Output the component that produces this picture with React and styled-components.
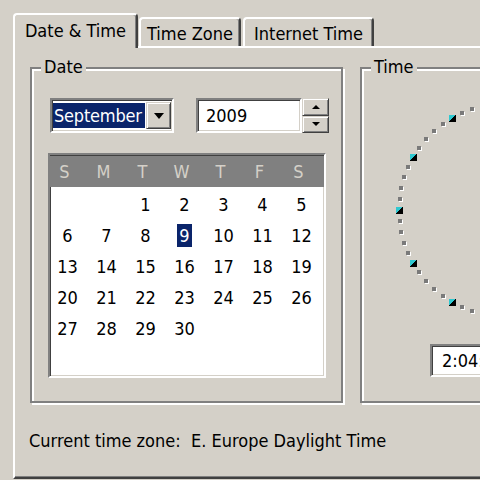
import React from 'react';
import styled, { createGlobalStyle } from 'styled-components';

const GlobalStyle = createGlobalStyle`
  html, body {
    margin: 0;
    padding: 0;
    background: #d4d0c8;
  }
  body {
    font-family: 'DejaVu Sans Condensed', 'DejaVu Sans', Tahoma, sans-serif;
    font-size: 18px;
    color: #000;
  }
`;

const MONTH_DAYS = [
  [null, null, 1, 2, 3, 4, 5],
  [6, 7, 8, 9, 10, 11, 12],
  [13, 14, 15, 16, 17, 18, 19],
  [20, 21, 22, 23, 24, 25, 26],
  [27, 28, 29, 30, null, null, null],
];

const WEEK = ['S', 'M', 'T', 'W', 'T', 'F', 'S'];

const ClockFace = () => {
  const cx = 113;
  const cy = 112;
  const r = 106;
  const dots = [];
  for (let i = 0; i < 60; i++) {
    const a = (i * 6 * Math.PI) / 180;
    const x = Math.round(cx + r * Math.sin(a));
    const y = Math.round(cy - r * Math.cos(a));
    if (i % 5 === 0) {
      dots.push(
        <g key={i}>
          <rect x={x - 3} y={y - 3} width="7" height="7" fill="#000" />
          <polygon points={`${x - 3},${y - 3} ${x + 3},${y - 3} ${x - 3},${y + 3}`} fill="#2fc8d0" />
        </g>
      );
    } else {
      dots.push(
        <g key={i}>
          <rect x={x - 1} y={y - 1} width="4" height="4" fill="#ffffff" />
          <rect x={x - 2} y={y - 2} width="4" height="4" fill="#7a7a7a" />
        </g>
      );
    }
  }
  return (
    <ClockSvg width="226" height="226" viewBox="0 0 226 226" shapeRendering="crispEdges">
      {dots}
    </ClockSvg>
  );
};

const App = () => {
  return (
    <>
      <GlobalStyle />
      <Screen>
        <TabStrip>
          <Tab $active $width={125}>Date &amp; Time</Tab>
          <Tab $width={102}>Time Zone</Tab>
          <Tab $width={131}>Internet Time</Tab>
        </TabStrip>
        <Panel>
          <GroupRow>
            <GroupBox $width={313}>
              <Legend>Date</Legend>
              <DateBody>
                <ControlRow>
                  <Combo>
                    <ComboText>September</ComboText>
                    <DropButton>
                      <svg width="10" height="6" viewBox="0 0 10 6">
                        <polygon points="0,0 10,0 5,6" fill="#000" />
                      </svg>
                    </DropButton>
                  </Combo>
                  <YearField>2009</YearField>
                  <Spinner>
                    <SpinButton>
                      <svg width="8" height="4" viewBox="0 0 8 4">
                        <polygon points="4,0 8,4 0,4" fill="#000" />
                      </svg>
                    </SpinButton>
                    <SpinButton>
                      <svg width="8" height="4" viewBox="0 0 8 4">
                        <polygon points="0,0 8,0 4,4" fill="#000" />
                      </svg>
                    </SpinButton>
                  </Spinner>
                </ControlRow>
                <Calendar>
                  <WeekHeader>
                    {WEEK.map((d, i) => (
                      <WeekDay key={i}>{d}</WeekDay>
                    ))}
                  </WeekHeader>
                  <DaysGrid>
                    {MONTH_DAYS.flat().map((d, i) => (
                      <DayCell key={i}>
                        {d && <DayNum $selected={d === 9}>{d}</DayNum>}
                      </DayCell>
                    ))}
                  </DaysGrid>
                </Calendar>
              </DateBody>
            </GroupBox>
            <GroupBox $width={260}>
              <Legend>Time</Legend>
              <TimeBody>
                <ClockFace />
                <TimeField>2:04:37 PM</TimeField>
              </TimeBody>
            </GroupBox>
          </GroupRow>
          <ZoneLine>Current time zone:&nbsp;&nbsp;E. Europe Daylight Time</ZoneLine>
        </Panel>
      </Screen>
    </>
  );
};

const Screen = styled.div`
  width: 480px;
  height: 480px;
  overflow: hidden;
  background: #d4d0c8;
  padding: 13px 0 0 13px;
  box-sizing: border-box;
`;

const TabStrip = styled.div`
  display: flex;
  align-items: flex-end;
  height: 33px;
  position: relative;
  z-index: 1;
`;

const Tab = styled.div`
  box-sizing: border-box;
  width: ${(p) => p.$width}px;
  height: ${(p) => (p.$active ? 35 : 29)}px;
  margin-bottom: ${(p) => (p.$active ? -2 : 0)}px;
  margin-right: ${(p) => (p.$active ? 1 : 2)}px;
  background: #d4d0c8;
  border-top: 2px solid #ffffff;
  border-left: 2px solid #ffffff;
  border-right: 2px solid #404040;
  box-shadow: inset -1px 0 0 #808080;
  border-radius: 4px 4px 0 0;
  display: flex;
  align-items: flex-start;
  justify-content: center;
  padding-top: ${(p) => (p.$active ? 6 : 5)}px;
  line-height: 20px;
  white-space: nowrap;
`;

const Panel = styled.div`
  box-sizing: border-box;
  width: 640px;
  height: 433px;
  background: #d4d0c8;
  border-top: 2px solid #ffffff;
  border-left: 2px solid #ffffff;
  border-bottom: 2px solid #404040;
  box-shadow: inset 0 -1px 0 #808080;
  padding: 0 0 0 15px;
  display: flex;
  flex-direction: column;
`;

const GroupRow = styled.div`
  display: flex;
  gap: 17px;
  margin-top: 19px;
`;

const GroupBox = styled.div`
  position: relative;
  box-sizing: border-box;
  width: ${(p) => p.$width}px;
  height: 336px;
  flex-shrink: 0;
  border: 2px solid #808080;
  box-shadow: inset 2px 2px 0 #ffffff, 2px 2px 0 #ffffff;
`;

const Legend = styled.div`
  position: absolute;
  top: -12px;
  left: 9px;
  padding: 0 3px;
  background: #d4d0c8;
  line-height: 20px;
`;

const DateBody = styled.div`
  display: flex;
  flex-direction: column;
  padding: 29px 0 0 18px;
`;

const ControlRow = styled.div`
  display: flex;
  align-items: flex-start;
`;

const Sunken = styled.div`
  box-sizing: border-box;
  border-top: 2px solid #808080;
  border-left: 2px solid #808080;
  border-right: 2px solid #ffffff;
  border-bottom: 2px solid #ffffff;
  box-shadow: inset 1px 1px 0 #404040, inset -1px -1px 0 #d4d0c8;
  background: #ffffff;
`;

const Combo = styled(Sunken)`
  width: 124px;
  height: 35px;
  display: flex;
  align-items: stretch;
  padding: 3px 1px 3px 1px;
`;

const ComboText = styled.div`
  flex: 1;
  background: #0a246a;
  color: #ffffff;
  line-height: 25px;
  padding-left: 1px;
  margin-right: 1px;
  letter-spacing: -0.2px;
  overflow: hidden;
  white-space: nowrap;
`;

const RaisedButton = styled.div`
  box-sizing: border-box;
  background: #d4d0c8;
  border-top: 1px solid #d4d0c8;
  border-left: 1px solid #d4d0c8;
  border-right: 1px solid #404040;
  border-bottom: 1px solid #404040;
  box-shadow: inset 1px 1px 0 #ffffff, inset -1px -1px 0 #808080;
  display: flex;
  align-items: center;
  justify-content: center;
`;

const DropButton = styled(RaisedButton)`
  width: 25px;
  flex-shrink: 0;
  margin: -1px 0;
`;

const YearField = styled(Sunken)`
  width: 106px;
  height: 35px;
  margin-left: 22px;
  padding-left: 8px;
  line-height: 31px;
`;

const Spinner = styled.div`
  width: 27px;
  height: 35px;
  display: flex;
  flex-direction: column;
`;

const SpinButton = styled(RaisedButton)`
  flex: 1;
`;

const Calendar = styled(Sunken)`
  width: 278px;
  height: 225px;
  margin: 20px 0 0 -2px;
  display: flex;
  flex-direction: column;
`;

const WeekHeader = styled.div`
  display: grid;
  grid-template-columns: repeat(7, 39px);
  height: 31px;
  margin-top: 1px;
  background: #808080;
  color: #d4d0c8;
`;

const WeekDay = styled.div`
  display: flex;
  align-items: center;
  justify-content: center;
  padding-right: 10px;
`;

const DaysGrid = styled.div`
  display: grid;
  grid-template-columns: repeat(7, 39px);
  grid-auto-rows: 31px;
  padding-top: 2px;
`;

const DayCell = styled.div`
  display: flex;
  align-items: center;
  justify-content: center;
  padding-right: 4px;
`;

const DayNum = styled.span`
  line-height: 23px;
  padding: 0 2px;
  background: ${(p) => (p.$selected ? '#0a246a' : 'transparent')};
  color: ${(p) => (p.$selected ? '#ffffff' : '#000000')};
`;

const TimeBody = styled.div`
  display: flex;
  flex-direction: column;
  align-items: flex-start;
  padding: 29px 0 0 30px;
`;

const ClockSvg = styled.svg`
  display: block;
`;

const TimeField = styled(Sunken)`
  width: 150px;
  height: 33px;
  margin: 20px 0 0 38px;
  padding-left: 10px;
  line-height: 29px;
  white-space: nowrap;
`;

const ZoneLine = styled.div`
  margin-top: 27px;
  margin-left: -1px;
  line-height: 22px;
`;

export default App;
